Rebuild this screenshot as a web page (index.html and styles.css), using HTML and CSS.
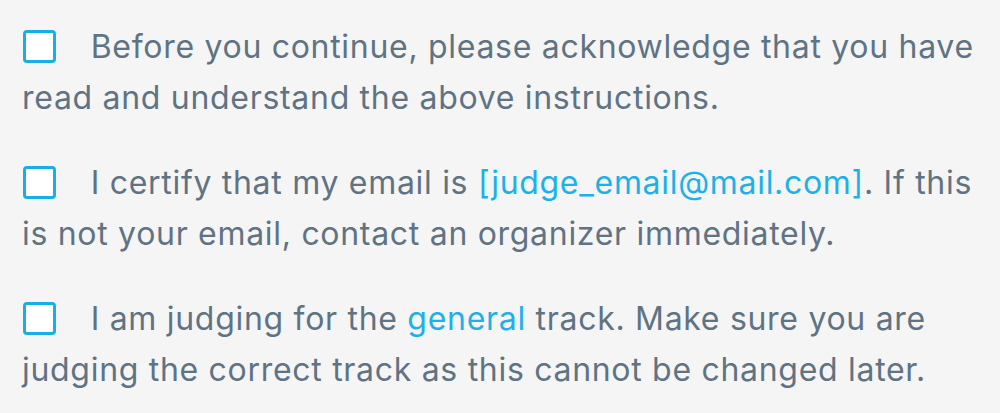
FILE: index.html
```html
<!DOCTYPE html>
<html lang="en">
<head>
    <meta charset="UTF-8">
    <meta name="viewport" content="width=device-width, initial-scale=1.0">
    <title>Judge confirmation</title>
    <link rel="stylesheet" href="styles.css">
</head>
<body>
    <div class="checklist">
        <label class="check-item">
            <span class="box"></span>
            Before you continue, please acknowledge that you have read and understand the above instructions.
        </label>
        <label class="check-item">
            <span class="box"></span>
            I certify that my email is <span class="accent">[judge_email@mail.com]</span>. If this is not your email, contact an organizer immediately.
        </label>
        <label class="check-item">
            <span class="box"></span>
            I am judging for the <span class="accent">general</span> track. Make sure you are judging the correct track as this cannot be changed later.
        </label>
    </div>
</body>
</html>
```

FILE: styles.css
```css
body {
    margin: 0;
    background-color: #f5f5f5;
    font-family: Inter, "Noto Sans", sans-serif;
    color: #5f7383;
}
.checklist {
    padding: 22px 16px 0 22px;
    display: flex;
    flex-direction: column;
    gap: 35px;
}
.check-item {
    display: block;
    font-size: 32px;
    letter-spacing: 0.7px;
    line-height: 50.5px;
    cursor: pointer;
}
.box {
    display: inline-block;
    width: 27px;
    height: 27px;
    border: 3.5px solid #1aaee8;
    border-radius: 4px;
    background-color: #fff;
    vertical-align: -5px;
    margin: 0 25px 0 1px;
}
.accent {
    color: #1eb1e9;
}
```
